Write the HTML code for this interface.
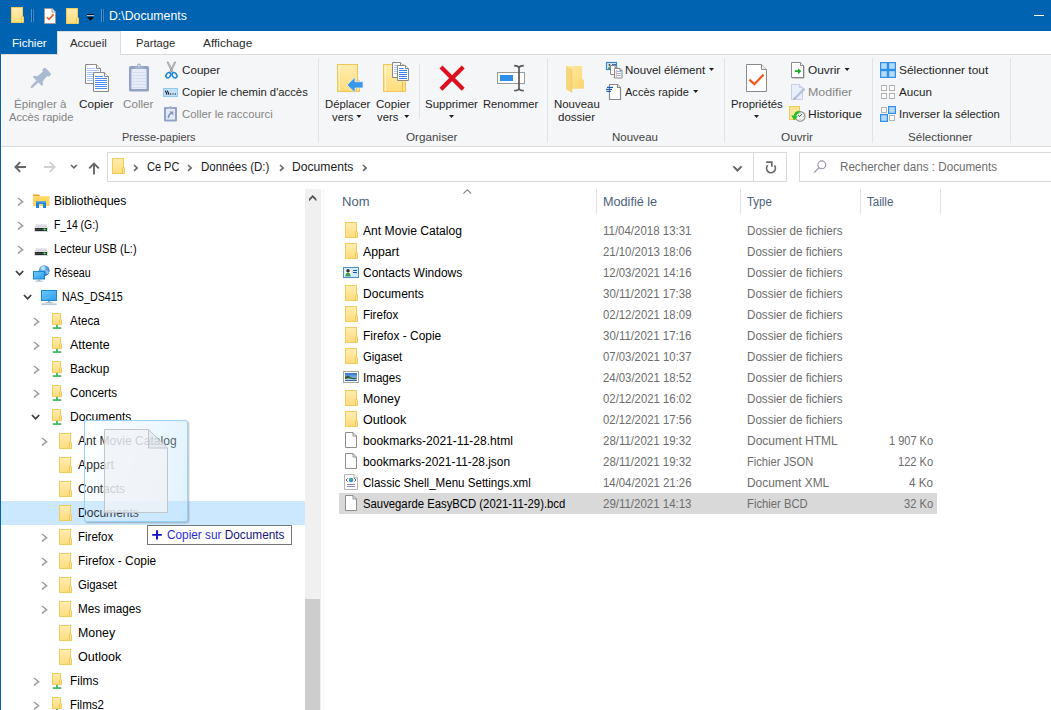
<!DOCTYPE html><html lang="fr"><head><meta charset="utf-8"><title>D:\Documents</title><style>
html,body{margin:0;padding:0;background:#fff;}
body{width:1051px;height:710px;overflow:hidden;position:relative;font-family:"Liberation Sans", sans-serif;font-size:12px;}
#w{position:absolute;left:0;top:0;width:1051px;height:710px;overflow:hidden;background:#fff;}
.t{position:absolute;white-space:pre;line-height:14px;height:14px;transform-origin:0 0;}
.b{position:absolute;}
svg{position:absolute;overflow:visible;}
</style></head><body><div id="w">
<div class="b" style="left:0;top:0;width:1051px;height:31px;background:#0063b1"></div>
<div class="b" style="left:0;top:31px;width:57px;height:23px;background:#0063b1"></div>
<div class="b" style="left:0;top:54px;width:1051px;height:92px;background:#f5f6f7;border-top:1px solid #dadbdc;border-bottom:1px solid #dadbdc;box-sizing:content-box;height:91px"></div>
<div class="b" style="left:57px;top:31px;width:62px;height:24px;background:#f5f6f7;border:1px solid #dadbdc;border-bottom:none;box-sizing:content-box;height:23px"></div>
<div class="b" style="left:1px;top:55px;width:1px;height:91px;background:#fdfdfd"></div>
<div class="b" style="left:318px;top:58px;width:1px;height:85px;background:#e2e3e4"></div>
<div class="b" style="left:547px;top:58px;width:1px;height:85px;background:#e2e3e4"></div>
<div class="b" style="left:724px;top:58px;width:1px;height:85px;background:#e2e3e4"></div>
<div class="b" style="left:872px;top:58px;width:1px;height:85px;background:#e2e3e4"></div>
<div class="b" style="left:1010px;top:58px;width:1px;height:85px;background:#e2e3e4"></div>
<div class="b" style="left:419px;top:64px;width:1px;height:55px;background:#e2e3e4"></div>
<div class="b" style="left:107px;top:152px;width:678px;height:28px;border:1px solid #d9d9d9;background:#fff"></div>
<div class="b" style="left:753px;top:153px;width:1px;height:28px;background:#d9d9d9"></div>
<div class="b" style="left:799px;top:152px;width:260px;height:28px;border:1px solid #d9d9d9;background:#fff"></div>
<div class="b" style="left:1px;top:501px;width:304px;height:24px;background:#cce8ff"></div>
<div class="b" style="left:305px;top:189px;width:16px;height:521px;background:#f0f0f0"></div>
<div class="b" style="left:305px;top:599px;width:15px;height:111px;background:#cdcdcd"></div>
<div class="b" style="left:323px;top:189px;width:1px;height:521px;background:#f6f6f6"></div>
<div class="b" style="left:596px;top:189px;width:1px;height:25px;background:#e2e2e2"></div>
<div class="b" style="left:740px;top:189px;width:1px;height:25px;background:#e2e2e2"></div>
<div class="b" style="left:860px;top:189px;width:1px;height:25px;background:#e2e2e2"></div>
<div class="b" style="left:940px;top:189px;width:1px;height:25px;background:#e2e2e2"></div>
<div class="b" style="left:339px;top:493px;width:598px;height:21px;background:#d9d9d9"></div>
<div class="b" style="left:0;top:0;width:1px;height:710px;background:#0063b1"></div>
<svg width="0" height="0" style="left:0;top:0"><defs>
<linearGradient id="gF" x1="0" y1="0" x2="0" y2="1"><stop offset="0" stop-color="#ffedb0"/><stop offset="1" stop-color="#ffdc7c"/></linearGradient>
<linearGradient id="gF2" x1="0" y1="0" x2="1" y2="1"><stop offset="0" stop-color="#ffe9a4"/><stop offset="1" stop-color="#fbd670"/></linearGradient>
<linearGradient id="gScr" x1="0" y1="0" x2="1" y2="1"><stop offset="0" stop-color="#6ccbff"/><stop offset="1" stop-color="#2f9bea"/></linearGradient>
<linearGradient id="gSky" x1="0" y1="0" x2="0" y2="1"><stop offset="0" stop-color="#2f74c8"/><stop offset="1" stop-color="#b8d8f4"/></linearGradient>
<radialGradient id="gGlobe" cx="0.4" cy="0.35" r="0.7"><stop offset="0" stop-color="#9bd4f7"/><stop offset="1" stop-color="#1f6fb8"/></radialGradient>
</defs></svg>
<svg style="left:11px;top:7px" width="13" height="16" viewBox="0 0 13 16"><rect x="0.5" y="0.5" width="11" height="15" fill="url(#gF)" stroke="#f1cb5e"/><path d="M10.5 15.5 V10.2 Q10.5 9.5 11.2 9.5 H11.8 Q12.5 9.5 12.5 10.2 V15.5 Z" fill="#ffe696" stroke="#efc75a"/></svg><div class="b" style="left:31px;top:9px;width:1px;height:13px;background:#4f95d2"></div><div class="b" style="left:32px;top:9px;width:1px;height:13px;background:#004e96"></div><div class="b" style="left:33px;top:9px;width:1px;height:13px;background:#3f86c6"></div><svg style="left:44px;top:8px" width="12" height="16" viewBox="0 0 12 16"><path d="M0.5 0.5 H8 L11.5 4 V15.5 H0.5 Z" fill="#fff" stroke="#9a9a9a"/><path d="M8 0.5 V4 H11.5" fill="#eee" stroke="#9a9a9a"/><path d="M2.8 9.2 L5 11.4 L9.6 6.4" fill="none" stroke="#f15a22" stroke-width="1.6"/></svg><svg style="left:66px;top:8px" width="13" height="16" viewBox="0 0 13 16"><rect x="0.5" y="0.5" width="11" height="15" fill="url(#gF)" stroke="#f1cb5e"/><path d="M10.5 15.5 V10.2 Q10.5 9.5 11.2 9.5 H11.8 Q12.5 9.5 12.5 10.2 V15.5 Z" fill="#ffe696" stroke="#efc75a"/></svg><div class="b" style="left:87px;top:14px;width:7px;height:1px;background:#0a0a0a"></div><div class="b" style="left:87px;top:15px;width:7px;height:1px;background:#cfe2f3;opacity:.8"></div><svg style="left:87px;top:17px" width="7" height="4" viewBox="0 0 7 4"><path d="M0 0 H7 L3.5 4 Z" fill="#0a0a0a"/></svg><div class="b" style="left:101px;top:9px;width:1px;height:13px;background:#4f95d2"></div><div class="b" style="left:102px;top:9px;width:1px;height:13px;background:#004e96"></div><div class="b" style="left:103px;top:9px;width:1px;height:13px;background:#3f86c6"></div><div class="b" style="left:1034px;top:15px;width:10px;height:1px;background:#fff"></div>
<svg style="left:14px;top:161px" width="12" height="12" viewBox="0 0 12 12"><path d="M12 6 H1.6 M6.2 1.2 L1.4 6 L6.2 10.8" fill="none" stroke="#666" stroke-width="1.9"/></svg><svg style="left:44px;top:161px" width="12" height="12" viewBox="0 0 12 12"><path d="M0 6 H10.4 M5.8 1.2 L10.6 6 L5.8 10.8" fill="none" stroke="#d0d0d0" stroke-width="1.9"/></svg><svg style="left:70.6px;top:164.6px" width="5.8" height="3.4" viewBox="0 0 5.8 3.4"><path d="M0 0 L2.9 2.9 L5.8 0" fill="none" stroke="#666" stroke-width="1.6"/></svg><svg style="left:88px;top:161.5px" width="12" height="12.5" viewBox="0 0 12 12.5"><path d="M6 12.5 V1.6 M1.2 6.4 L6 1.6 L10.8 6.4" fill="none" stroke="#666" stroke-width="1.9"/></svg><svg style="left:112px;top:158px" width="13" height="16" viewBox="0 0 13 16"><rect x="0.5" y="0.5" width="11" height="15" fill="url(#gF)" stroke="#f1cb5e"/><path d="M10.5 15.5 V10.2 Q10.5 9.5 11.2 9.5 H11.8 Q12.5 9.5 12.5 10.2 V15.5 Z" fill="#ffe696" stroke="#efc75a"/></svg><svg style="left:133.9px;top:164.6px" width="3.2" height="5.8" viewBox="0 0 3.2 5.8"><path d="M0.0 0 L3.2 2.9 L0 5.8" fill="none" stroke="#666" stroke-width="1.6"/></svg><svg style="left:187.9px;top:164.6px" width="3.2" height="5.8" viewBox="0 0 3.2 5.8"><path d="M0.0 0 L3.2 2.9 L0 5.8" fill="none" stroke="#666" stroke-width="1.6"/></svg><svg style="left:279.9px;top:164.6px" width="3.2" height="5.8" viewBox="0 0 3.2 5.8"><path d="M0.0 0 L3.2 2.9 L0 5.8" fill="none" stroke="#666" stroke-width="1.6"/></svg><svg style="left:363.4px;top:164.6px" width="3.2" height="5.8" viewBox="0 0 3.2 5.8"><path d="M0.0 0 L3.2 2.9 L0 5.8" fill="none" stroke="#666" stroke-width="1.6"/></svg><svg style="left:733.4px;top:165.6px" width="9" height="5.2" viewBox="0 0 9 5.2"><path d="M0.4 0.4 L4.5 4.5 L8.6 0.4" fill="none" stroke="#666" stroke-width="2"/></svg><svg style="left:764px;top:160px" width="14" height="14" viewBox="0 0 14 14"><path d="M10.5 5.6 A4.4 4.4 0 1 1 3.7 5.3" fill="none" stroke="#666" stroke-width="1.7"/><path d="M2.2 2.1 H7.8 V6.8" fill="none" stroke="#666" stroke-width="1.7"/></svg><svg style="left:813px;top:160px" width="14" height="14" viewBox="0 0 14 14"><circle cx="8.8" cy="4.8" r="3.9" fill="none" stroke="#9a90a6" stroke-width="1.1"/><path d="M6 7.6 L1.2 12.6" stroke="#9a90a6" stroke-width="1.2"/></svg><svg style="left:309px;top:194.6px" width="7.4" height="6.2" viewBox="0 0 7.4 6.2"><path d="M0 3.7 L3.7 0 L7.4 3.7 V6.2 L3.7 2.5 L0 6.2 Z" fill="#505050"/></svg><svg style="left:462.5px;top:188.8px" width="8.6" height="5" viewBox="0 0 8.6 5"><path d="M0.4 4.6 L4.3 0.8 L8.2 4.6" fill="none" stroke="#808080" stroke-width="1.1"/></svg>
<svg style="left:0;top:54px" width="1051" height="92" viewBox="0 54 1051 92"><g transform="translate(48 70.8) rotate(45)" fill="#a9bad1"><rect x="-4.8" y="-0.3" width="9.6" height="4.4" rx="1.5"/><rect x="-3.2" y="3" width="6.4" height="7"/><path d="M-3.2 8.6 Q-3.4 12 -5.8 12.8 Q-6.4 13.1 -6.4 13.8 V15 H6.4 V13.8 Q6.4 13.1 5.8 12.8 Q3.4 12 3.2 8.6 Z"/><path d="M-1.5 14.8 H1.5 L1.1 23.2 Q0 25 -1.1 23.2 Z"/></g><path d="M85.5 64.5 H96.5 L100.5 68.5 V83.5 H85.5 Z" fill="#fff" stroke="#8a8a8a" stroke-width="1"/><path d="M96.5 64.5 V68.5 H100.5" fill="#f2f2f2" stroke="#8a8a8a" stroke-width="1"/><path d="M87 68.5 H95" stroke="#a9c9f7" stroke-width="1"/><path d="M87 70.5 H99" stroke="#a9c9f7" stroke-width="1"/><path d="M87 72.5 H99" stroke="#a9c9f7" stroke-width="1"/><path d="M87 74.5 H99" stroke="#a9c9f7" stroke-width="1"/><path d="M87 76.5 H99" stroke="#a9c9f7" stroke-width="1"/><path d="M87 78.5 H99" stroke="#a9c9f7" stroke-width="1"/><path d="M87 80.5 H99" stroke="#a9c9f7" stroke-width="1"/><path d="M93.5 72.5 H104.5 L108.5 76.5 V91.5 H93.5 Z" fill="#fff" stroke="#8a8a8a" stroke-width="1"/><path d="M104.5 72.5 V76.5 H108.5" fill="#f2f2f2" stroke="#8a8a8a" stroke-width="1"/><path d="M95 76.5 H103" stroke="#4a8ef5" stroke-width="1"/><path d="M95 78.5 H107" stroke="#4a8ef5" stroke-width="1"/><path d="M95 80.5 H107" stroke="#4a8ef5" stroke-width="1"/><path d="M95 82.5 H107" stroke="#4a8ef5" stroke-width="1"/><path d="M95 84.5 H107" stroke="#4a8ef5" stroke-width="1"/><path d="M95 86.5 H107" stroke="#4a8ef5" stroke-width="1"/><path d="M95 88.5 H107" stroke="#4a8ef5" stroke-width="1"/><rect x="129" y="66" width="20" height="25.6" rx="1.5" fill="#91a2c6"/><rect x="131.5" y="69" width="15" height="20" fill="#e6ecf8"/><path d="M134.5 69 V66.5 H137 Q137 63.4 139 63.4 Q141 63.4 141 66.5 H143.5 V69 Z" fill="#a3b1cf"/><circle cx="139" cy="65.6" r="0.9" fill="#e6ecf8"/><path d="M131.5 72.5 H146.5" stroke="#d5deef" stroke-width="1"/><path d="M131.5 75.5 H146.5" stroke="#d5deef" stroke-width="1"/><path d="M131.5 78.5 H146.5" stroke="#d5deef" stroke-width="1"/><path d="M131.5 81.5 H146.5" stroke="#d5deef" stroke-width="1"/><path d="M131.5 84.5 H146.5" stroke="#d5deef" stroke-width="1"/><path d="M131.5 87.5 H146.5" stroke="#d5deef" stroke-width="1"/><path d="M167 62 L168.4 62 L173.6 73 L172.4 73.4 Z M175.8 62 L174.4 62 L169.2 73 L170.4 73.4 Z" fill="#d8d8d8" stroke="#8f8f8f" stroke-width="0.7"/><ellipse cx="168.3" cy="75.2" rx="2.1" ry="2.9" transform="rotate(35 168.3 75.2)" fill="none" stroke="#1b86d8" stroke-width="1.5"/><ellipse cx="174.5" cy="75.2" rx="2.1" ry="2.9" transform="rotate(-35 174.5 75.2)" fill="none" stroke="#1b86d8" stroke-width="1.5"/><rect x="163.5" y="88.5" width="14" height="8" fill="#bfe1fb" stroke="#93c8f0"/><path d="M165.4 90.6 L167 94.6 M167.4 90.6 L169 94.6" stroke="#111" stroke-width="1.1"/><path d="M170 94 H171.2 M172.4 94 H173.6 M174.8 94 H176" stroke="#111" stroke-width="1.1"/><rect x="164" y="107" width="13" height="14.6" rx="1" fill="#91a2c6"/><rect x="166" y="109" width="9" height="10.6" fill="#e3e9f6"/><path d="M167.5 109 V107.6 H169 Q169 106 170.5 106 Q172 106 172 107.6 H173.5 V109 Z" fill="#a3b1cf"/><path d="M169.4 111.4 H173.4 V115.4 Z" fill="#8496bd"/><path d="M172 112.8 Q168.6 114 168.4 118" fill="none" stroke="#8496bd" stroke-width="1.7"/><rect x="337.5" y="64.5" width="20" height="27" fill="url(#gF)" stroke="#efc858"/><path d="M339.5 65.5 V90.5" stroke="#fff4cc" stroke-width="1"/><path d="M356.5 91.5 V81.5 Q356.5 80 358 80 Q359.5 80 359.5 81.5 V91.5 Z" fill="#ffe28a" stroke="#efc350"/><path d="M347 85 L355 77.3 V81.7 H363 V88 H355 V92.6 Z" fill="#3b97e8" stroke="#dbeeff" stroke-width="0.8"/><rect x="383.5" y="64.5" width="20" height="27" fill="url(#gF)" stroke="#efc858"/><path d="M385.5 65.5 V90.5" stroke="#fff4cc" stroke-width="1"/><path d="M402.5 91.5 V81.5 Q402.5 80 404 80 Q405.5 80 405.5 81.5 V91.5 Z" fill="#ffe28a" stroke="#efc350"/><path d="M392.5 62.5 H400.5 L403.5 65.5 V77.5 H392.5 Z" fill="#fff" stroke="#8a8a8a" stroke-width="1"/><path d="M400.5 62.5 V65.5 H403.5" fill="#f2f2f2" stroke="#8a8a8a" stroke-width="1"/><path d="M394 65.5 H398" stroke="#a9c9f7" stroke-width="1"/><path d="M394 67.5 H402" stroke="#a9c9f7" stroke-width="1"/><path d="M394 69.5 H402" stroke="#a9c9f7" stroke-width="1"/><path d="M394 71.5 H402" stroke="#a9c9f7" stroke-width="1"/><path d="M394 73.5 H402" stroke="#a9c9f7" stroke-width="1"/><path d="M397.5 65.5 H405.5 L408.5 68.5 V80.5 H397.5 Z" fill="#fff" stroke="#8a8a8a" stroke-width="1"/><path d="M405.5 65.5 V68.5 H408.5" fill="#f2f2f2" stroke="#8a8a8a" stroke-width="1"/><path d="M399 68.5 H403.5" stroke="#3d84f2" stroke-width="1"/><path d="M399 70.5 H407" stroke="#3d84f2" stroke-width="1"/><path d="M399 72.5 H407" stroke="#3d84f2" stroke-width="1"/><path d="M399 74.5 H407" stroke="#3d84f2" stroke-width="1"/><path d="M399 76.5 H407" stroke="#3d84f2" stroke-width="1"/><path d="M399 78.5 H407" stroke="#3d84f2" stroke-width="1"/><path d="M441 67 L463.2 89.2 M463.2 67 L441 89.2" stroke="#de0f1e" stroke-width="4.2" fill="none"/><rect x="497.5" y="72.5" width="27" height="11" fill="#fff" stroke="#9b9b9b"/><rect x="500" y="75" width="13" height="6" fill="#2e8fe8"/><path d="M519 67 V89.5 M514.2 65.6 Q518.6 65.6 519 68 Q519.4 65.6 523.8 65.6 M514.2 90.6 Q518.6 90.6 519 88.4 Q519.4 90.6 523.8 90.6" fill="none" stroke="#595959" stroke-width="1.7"/><path d="M566.2 66 H582.1 V78.4 L584 80.6 V88.8 H571 Z" fill="url(#gF2)"/><path d="M566.1 66 L571.8 69.4 V92.6 L566.1 89.4 Z" fill="#f6d676"/><path d="M571.8 69.4 V92.6" stroke="#e9c35c" stroke-width="0.6"/><rect x="606.5" y="62.5" width="10" height="7" fill="#d9ecfa" stroke="#3b87c6" stroke-width="1.2"/><circle cx="609.5" cy="65" r="1" fill="#5a4a3a"/><path d="M608 69 Q608 66.4 609.6 66.4 Q611.2 66.4 611.2 69Z" fill="#4a9a5a"/><rect x="612" y="64" width="4" height="3" fill="#3b6ea6"/><path d="M610.5 65.5 H615.0 L617.0 67.5 V74.5 H610.5 Z" fill="#fff" stroke="#8a8a8a" stroke-width="1"/><path d="M615.0 65.5 V67.5 H617.0" fill="#f2f2f2" stroke="#8a8a8a" stroke-width="1"/><path d="M614.5 68.5 H620.0 L622.0 70.5 V78.0 H614.5 Z" fill="#fff" stroke="#8a8a8a" stroke-width="1"/><path d="M620.0 68.5 V70.5 H622.0" fill="#f2f2f2" stroke="#8a8a8a" stroke-width="1"/><path d="M617 71.5 H621" stroke="#8bb6ee" stroke-width="1"/><path d="M617 73.5 H621" stroke="#8bb6ee" stroke-width="1"/><path d="M617 75.5 H621" stroke="#8bb6ee" stroke-width="1"/><path d="M616.3 70 V77.6" stroke="#e88" stroke-width="0.8"/><path d="M609.5 84.5 H617.5 L620.5 87.5 V99.5 H609.5 Z" fill="#fff" stroke="#8a8a8a" stroke-width="1.2"/><path d="M617.5 84.5 V87.5 H620.5" fill="#f2f2f2" stroke="#8a8a8a" stroke-width="1.2"/><path d="M607 87.4 H613" stroke="#1a5fb4" stroke-width="1.2"/><path d="M606 89.4 H612" stroke="#1a5fb4" stroke-width="1.2"/><path d="M606.4 91.4 H611" stroke="#1a5fb4" stroke-width="1.2"/><path d="M746.5 64.5 H761.5 L766.5 69.5 V91.5 H746.5 Z" fill="#fff" stroke="#8a8a8a" stroke-width="1"/><path d="M761.5 64.5 V69.5 H766.5" fill="#f2f2f2" stroke="#8a8a8a" stroke-width="1"/><path d="M749.4 79.6 L754.4 84.2 L763.6 74.6" fill="none" stroke="#f25a1d" stroke-width="2.3"/><path d="M791.5 62.5 H800.5 L803.5 65.5 V77.5 H791.5 Z" fill="#fff" stroke="#8c8c8c" stroke-width="1"/><path d="M800.5 62.5 V65.5 H803.5" fill="#f2f2f2" stroke="#8c8c8c" stroke-width="1"/><path d="M792 78 H804 V66" fill="none" stroke="#6a6a6a" stroke-width="0.8" opacity="0.7"/><path d="M794.8 70.3 H798 V68.2 L801.4 71.2 L798 74.2 V72.1 H794.8 Z" fill="#1fa824"/><path d="M791.5 84.5 H799.5 L802.5 87.5 V99.5 H791.5 Z" fill="#e9eef8" stroke="#c3cfe6" stroke-width="1"/><path d="M799.5 84.5 V87.5 H802.5" fill="#dfe6f3" stroke="#c3cfe6" stroke-width="1"/><path d="M804.6 88.6 L794 99.2" stroke="#b3c0dc" stroke-width="2.2"/><path d="M794.6 97.2 L793.4 99.8 L796 98.8 Z" fill="#9aa8c8"/><rect x="789.5" y="106.5" width="10" height="13" fill="#ffe59b" stroke="#f3ca52"/><circle cx="800.2" cy="116.4" r="4.8" fill="#eef0f2" stroke="#8e8e8e" stroke-width="1.1"/><path d="M798.2 115 L799.5 116.6 L801.8 114.2" fill="none" stroke="#3a3a3a" stroke-width="0.9"/><path d="M800.2 112.8 v0.8 M800.2 119.2 v0.8 M803 116.4 h0.8" stroke="#777" stroke-width="0.7"/><path d="M799.4 112 Q795.4 112.2 794.8 116.4" fill="none" stroke="#22c022" stroke-width="2.6"/><path d="M791.2 115.2 L797.8 116.4 L794 120.2 Z" fill="#22c022"/><rect x="880.6" y="62.6" width="6.8" height="6.8" fill="#b3dafc" stroke="#2e8fe8" stroke-width="1.2"/><rect x="888.6" y="62.6" width="6.8" height="6.8" fill="#b3dafc" stroke="#2e8fe8" stroke-width="1.2"/><rect x="880.6" y="70.6" width="6.8" height="6.8" fill="#b3dafc" stroke="#2e8fe8" stroke-width="1.2"/><rect x="888.6" y="70.6" width="6.8" height="6.8" fill="#b3dafc" stroke="#2e8fe8" stroke-width="1.2"/><rect x="881.5" y="85.5" width="5" height="5" fill="#fff" stroke="#b2b2b2"/><rect x="889.5" y="85.5" width="5" height="5" fill="#fff" stroke="#b2b2b2"/><rect x="881.5" y="93.5" width="5" height="5" fill="#fff" stroke="#b2b2b2"/><rect x="889.5" y="93.5" width="5" height="5" fill="#fff" stroke="#b2b2b2"/><rect x="881.5" y="107.5" width="5" height="5" fill="#fff" stroke="#b2b2b2"/><rect x="889.5" y="115.5" width="5" height="5" fill="#fff" stroke="#b2b2b2"/><rect x="888.6" y="106.6" width="6.8" height="6.8" fill="#b3dafc" stroke="#2e8fe8" stroke-width="1.2"/><rect x="880.6" y="114.6" width="6.8" height="6.8" fill="#b3dafc" stroke="#2e8fe8" stroke-width="1.2"/><path d="M356.4 115 h5 l-2.5 3 Z" fill="#1e1e1e"/><path d="M404.2 115 h5 l-2.5 3 Z" fill="#1e1e1e"/><path d="M449 115 h5 l-2.5 3 Z" fill="#1e1e1e"/><path d="M754 115 h5 l-2.5 3 Z" fill="#1e1e1e"/><path d="M709 68 h5 l-2.5 3 Z" fill="#1e1e1e"/><path d="M693.2 90 h5 l-2.5 3 Z" fill="#1e1e1e"/><path d="M844.6 68 h5 l-2.5 3 Z" fill="#1e1e1e"/></svg>
<svg style="left:345px;top:222px" width="13" height="16" viewBox="0 0 13 16"><rect x="0.5" y="0.5" width="11" height="15" fill="url(#gF)" stroke="#f1cb5e"/><path d="M10.5 15.5 V10.2 Q10.5 9.5 11.2 9.5 H11.8 Q12.5 9.5 12.5 10.2 V15.5 Z" fill="#ffe696" stroke="#efc75a"/></svg>
<svg style="left:345px;top:243px" width="13" height="16" viewBox="0 0 13 16"><rect x="0.5" y="0.5" width="11" height="15" fill="url(#gF)" stroke="#f1cb5e"/><path d="M10.5 15.5 V10.2 Q10.5 9.5 11.2 9.5 H11.8 Q12.5 9.5 12.5 10.2 V15.5 Z" fill="#ffe696" stroke="#efc75a"/></svg>
<svg style="left:343px;top:267px" width="16" height="11" viewBox="0 0 16 11"><rect x="0.5" y="0.5" width="15" height="10" fill="#d3eafa" stroke="#4a93cf"/><rect x="1.5" y="1.5" width="7" height="8" fill="#eef7fd"/><circle cx="5" cy="3.8" r="1.7" fill="#3b2a1e"/><path d="M2.3 9.5 Q2.3 5.8 5 5.8 Q7.7 5.8 7.7 9.5 Z" fill="#3f9a57"/><path d="M10 3.5 H14 M10 5.5 H14" stroke="#1d5a96" stroke-width="1"/></svg>
<svg style="left:345px;top:285px" width="13" height="16" viewBox="0 0 13 16"><rect x="0.5" y="0.5" width="11" height="15" fill="url(#gF)" stroke="#f1cb5e"/><path d="M10.5 15.5 V10.2 Q10.5 9.5 11.2 9.5 H11.8 Q12.5 9.5 12.5 10.2 V15.5 Z" fill="#ffe696" stroke="#efc75a"/></svg>
<svg style="left:345px;top:306px" width="13" height="16" viewBox="0 0 13 16"><rect x="0.5" y="0.5" width="11" height="15" fill="url(#gF)" stroke="#f1cb5e"/><path d="M10.5 15.5 V10.2 Q10.5 9.5 11.2 9.5 H11.8 Q12.5 9.5 12.5 10.2 V15.5 Z" fill="#ffe696" stroke="#efc75a"/></svg>
<svg style="left:345px;top:327px" width="13" height="16" viewBox="0 0 13 16"><rect x="0.5" y="0.5" width="11" height="15" fill="url(#gF)" stroke="#f1cb5e"/><path d="M10.5 15.5 V10.2 Q10.5 9.5 11.2 9.5 H11.8 Q12.5 9.5 12.5 10.2 V15.5 Z" fill="#ffe696" stroke="#efc75a"/></svg>
<svg style="left:345px;top:348px" width="13" height="16" viewBox="0 0 13 16"><rect x="0.5" y="0.5" width="11" height="15" fill="url(#gF)" stroke="#f1cb5e"/><path d="M10.5 15.5 V10.2 Q10.5 9.5 11.2 9.5 H11.8 Q12.5 9.5 12.5 10.2 V15.5 Z" fill="#ffe696" stroke="#efc75a"/></svg>
<svg style="left:343px;top:371px" width="16" height="12" viewBox="0 0 16 12"><rect x="0.5" y="0.5" width="15" height="11" fill="#fff" stroke="#a6a6a6"/><rect x="2" y="2" width="12" height="8" fill="url(#gSky)"/><path d="M2 6 Q5 3.5 8 6.5 Q10 7.3 14 7 V10 H2 Z" fill="#2f5b3c"/><path d="M2 8 Q6 7 9 8 Q12 8.6 14 7.6 V10 H2 Z" fill="#dfeaf2"/><rect x="2" y="8.8" width="12" height="1.2" fill="#2a66a8"/></svg>
<svg style="left:345px;top:390px" width="13" height="16" viewBox="0 0 13 16"><rect x="0.5" y="0.5" width="11" height="15" fill="url(#gF)" stroke="#f1cb5e"/><path d="M10.5 15.5 V10.2 Q10.5 9.5 11.2 9.5 H11.8 Q12.5 9.5 12.5 10.2 V15.5 Z" fill="#ffe696" stroke="#efc75a"/></svg>
<svg style="left:345px;top:411px" width="13" height="16" viewBox="0 0 13 16"><rect x="0.5" y="0.5" width="11" height="15" fill="url(#gF)" stroke="#f1cb5e"/><path d="M10.5 15.5 V10.2 Q10.5 9.5 11.2 9.5 H11.8 Q12.5 9.5 12.5 10.2 V15.5 Z" fill="#ffe696" stroke="#efc75a"/></svg>
<svg style="left:345px;top:432px" width="12" height="16" viewBox="0 0 12 16"><path d="M0.5 0.5 H8 L11.5 4 V15.5 H0.5 Z" fill="#fff" stroke="#8e8e8e"/><path d="M8 0.5 V4 H11.5" fill="none" stroke="#8e8e8e"/></svg>
<svg style="left:345px;top:453px" width="12" height="16" viewBox="0 0 12 16"><path d="M0.5 0.5 H8 L11.5 4 V15.5 H0.5 Z" fill="#fff" stroke="#8e8e8e"/><path d="M8 0.5 V4 H11.5" fill="none" stroke="#8e8e8e"/></svg>
<svg style="left:344px;top:474px" width="14" height="16" viewBox="0 0 14 16"><path d="M0.5 0.5 H10 L13.5 4 V15.5 H0.5 Z" fill="#fff" stroke="#b4b4b4"/><path d="M10 0.5 V4 H13.5" fill="#f4f4f4" stroke="#b4b4b4"/><circle cx="7" cy="6" r="2.2" fill="#2c8ed6"/><circle cx="6.6" cy="5.6" r="1" fill="#5fc36a"/><path d="M3.6 4.4 L2 6 L3.6 7.6 M10.4 4.4 L12 6 L10.4 7.6" fill="none" stroke="#555" stroke-width="0.9"/><path d="M3 10.5 H11 M3 12.5 H11" stroke="#8c88b8" stroke-width="1"/></svg>
<svg style="left:345px;top:495px" width="12" height="16" viewBox="0 0 12 16"><path d="M0.5 0.5 H8 L11.5 4 V15.5 H0.5 Z" fill="#fff" stroke="#8e8e8e"/><path d="M8 0.5 V4 H11.5" fill="none" stroke="#8e8e8e"/></svg>
<svg style="left:32.5px;top:193.5px" width="17" height="14" viewBox="0 0 17 14"><path d="M0 0.5 H6 L7.5 2.5 H0 Z" fill="#e8a21a"/><path d="M0 2 H16.5 V12 H0 Z" fill="#ffd75e"/><path d="M0 2 H16.5 V3 H0 Z" fill="#ffe38c"/><path d="M3 14 V7.5 H13 V14 H10 V10 H6 V14 Z" fill="#1f86e0"/><path d="M3 7.5 H13 V8.6 H3 Z" fill="#4aa6f0"/></svg>
<svg style="left:17.6px;top:198.1px" width="4.6" height="7.4" viewBox="0 0 4.6 7.4"><path d="M0.0 0 L4.6 3.7 L0 7.4" fill="none" stroke="#a0a0a0" stroke-width="1.6"/></svg>
<svg style="left:34.0px;top:224px" width="14" height="8" viewBox="0 0 14 8"><path d="M2 0 H12.3 L13.8 4 H0.6 Z" fill="#d9dbdf"/><path d="M2.4 0 H12 L12.3 1 H2 Z" fill="#e6e7ea"/><rect x="0.5" y="7" width="13.6" height="1" fill="#d2d5d9"/><rect x="0.8" y="4" width="12.4" height="3" rx="0.4" fill="#2c2c2c"/><rect x="1" y="5" width="12" height="0.8" fill="#444"/><circle cx="10.6" cy="5.45" r="1.15" fill="#35e55f"/></svg>
<svg style="left:17.6px;top:222.1px" width="4.6" height="7.4" viewBox="0 0 4.6 7.4"><path d="M0.0 0 L4.6 3.7 L0 7.4" fill="none" stroke="#a0a0a0" stroke-width="1.6"/></svg>
<svg style="left:34.0px;top:248px" width="14" height="8" viewBox="0 0 14 8"><path d="M2 0 H12.3 L13.8 4 H0.6 Z" fill="#d9dbdf"/><path d="M2.4 0 H12 L12.3 1 H2 Z" fill="#e6e7ea"/><rect x="0.5" y="7" width="13.6" height="1" fill="#d2d5d9"/><rect x="0.8" y="4" width="12.4" height="3" rx="0.4" fill="#2c2c2c"/><rect x="1" y="5" width="12" height="0.8" fill="#444"/><circle cx="10.6" cy="5.45" r="1.15" fill="#35e55f"/></svg>
<svg style="left:17.6px;top:246.1px" width="4.6" height="7.4" viewBox="0 0 4.6 7.4"><path d="M0.0 0 L4.6 3.7 L0 7.4" fill="none" stroke="#a0a0a0" stroke-width="1.6"/></svg>
<svg style="left:33.0px;top:264.5px" width="17" height="17" viewBox="0 0 17 17"><circle cx="11.2" cy="5.6" r="5.4" fill="url(#gGlobe)"/><path d="M8 2.2 Q10 0.8 12 1.6 Q11 3 12.4 4 Q11 5.6 9 4.6 Q7.6 4 8 2.2 Z" fill="#bfe6fb" opacity="0.9"/><path d="M13.5 5 Q15.5 5.5 16 7.5 Q15 9.5 13.6 9 Q13 7 13.5 5Z" fill="#a9dbf7" opacity="0.8"/><rect x="0.5" y="6.5" width="11" height="7.5" fill="url(#gScr)" stroke="#1c86d4"/><rect x="5" y="14.5" width="2" height="1.2" fill="#8fa6b8"/><rect x="2.5" y="15.6" width="7" height="1" fill="#9fb4c4"/></svg>
<svg style="left:16.0px;top:270.8px" width="7.2" height="3.8" viewBox="0 0 7.2 3.8"><path d="M0 0 L3.6 3.8 L7.2 0" fill="none" stroke="#3c3c3c" stroke-width="1.8"/></svg>
<svg style="left:41.0px;top:290px" width="16" height="15" viewBox="0 0 16 15"><rect x="0.5" y="0.5" width="15" height="10" fill="url(#gScr)" stroke="#1c86d4"/><rect x="7" y="11" width="2" height="1.6" fill="#9ab0c2"/><rect x="4.5" y="12.2" width="7" height="0.8" fill="#9ab0c2"/><rect x="0.3" y="13.6" width="15.4" height="1" fill="#8aa4ba"/></svg>
<svg style="left:24.0px;top:294.8px" width="7.2" height="3.8" viewBox="0 0 7.2 3.8"><path d="M0 0 L3.6 3.8 L7.2 0" fill="none" stroke="#3c3c3c" stroke-width="1.8"/></svg>
<svg style="left:51.5px;top:313px" width="11" height="16" viewBox="0 0 11 16"><rect x="0.5" y="0.5" width="8" height="11" fill="url(#gF)" stroke="#f1cb5e"/><path d="M7.5 11.5 V7.2 Q7.5 6.5 8.2 6.5 H8.8 Q9.5 6.5 9.5 7.2 V11.5 Z" fill="#ffe696" stroke="#efc75a"/><rect x="4.2" y="12" width="1.6" height="2.6" fill="#1fb04a"/><rect x="0.8" y="14.3" width="8.4" height="1.5" fill="#1fb04a"/></svg>
<svg style="left:33.6px;top:318.1px" width="4.6" height="7.4" viewBox="0 0 4.6 7.4"><path d="M0.0 0 L4.6 3.7 L0 7.4" fill="none" stroke="#a0a0a0" stroke-width="1.6"/></svg>
<svg style="left:51.5px;top:337px" width="11" height="16" viewBox="0 0 11 16"><rect x="0.5" y="0.5" width="8" height="11" fill="url(#gF)" stroke="#f1cb5e"/><path d="M7.5 11.5 V7.2 Q7.5 6.5 8.2 6.5 H8.8 Q9.5 6.5 9.5 7.2 V11.5 Z" fill="#ffe696" stroke="#efc75a"/><rect x="4.2" y="12" width="1.6" height="2.6" fill="#1fb04a"/><rect x="0.8" y="14.3" width="8.4" height="1.5" fill="#1fb04a"/></svg>
<svg style="left:33.6px;top:342.1px" width="4.6" height="7.4" viewBox="0 0 4.6 7.4"><path d="M0.0 0 L4.6 3.7 L0 7.4" fill="none" stroke="#a0a0a0" stroke-width="1.6"/></svg>
<svg style="left:51.5px;top:361px" width="11" height="16" viewBox="0 0 11 16"><rect x="0.5" y="0.5" width="8" height="11" fill="url(#gF)" stroke="#f1cb5e"/><path d="M7.5 11.5 V7.2 Q7.5 6.5 8.2 6.5 H8.8 Q9.5 6.5 9.5 7.2 V11.5 Z" fill="#ffe696" stroke="#efc75a"/><rect x="4.2" y="12" width="1.6" height="2.6" fill="#1fb04a"/><rect x="0.8" y="14.3" width="8.4" height="1.5" fill="#1fb04a"/></svg>
<svg style="left:33.6px;top:366.1px" width="4.6" height="7.4" viewBox="0 0 4.6 7.4"><path d="M0.0 0 L4.6 3.7 L0 7.4" fill="none" stroke="#a0a0a0" stroke-width="1.6"/></svg>
<svg style="left:51.5px;top:385px" width="11" height="16" viewBox="0 0 11 16"><rect x="0.5" y="0.5" width="8" height="11" fill="url(#gF)" stroke="#f1cb5e"/><path d="M7.5 11.5 V7.2 Q7.5 6.5 8.2 6.5 H8.8 Q9.5 6.5 9.5 7.2 V11.5 Z" fill="#ffe696" stroke="#efc75a"/><rect x="4.2" y="12" width="1.6" height="2.6" fill="#1fb04a"/><rect x="0.8" y="14.3" width="8.4" height="1.5" fill="#1fb04a"/></svg>
<svg style="left:33.6px;top:390.1px" width="4.6" height="7.4" viewBox="0 0 4.6 7.4"><path d="M0.0 0 L4.6 3.7 L0 7.4" fill="none" stroke="#a0a0a0" stroke-width="1.6"/></svg>
<svg style="left:51.5px;top:409px" width="11" height="16" viewBox="0 0 11 16"><rect x="0.5" y="0.5" width="8" height="11" fill="url(#gF)" stroke="#f1cb5e"/><path d="M7.5 11.5 V7.2 Q7.5 6.5 8.2 6.5 H8.8 Q9.5 6.5 9.5 7.2 V11.5 Z" fill="#ffe696" stroke="#efc75a"/><rect x="4.2" y="12" width="1.6" height="2.6" fill="#1fb04a"/><rect x="0.8" y="14.3" width="8.4" height="1.5" fill="#1fb04a"/></svg>
<svg style="left:32.0px;top:414.8px" width="7.2" height="3.8" viewBox="0 0 7.2 3.8"><path d="M0 0 L3.6 3.8 L7.2 0" fill="none" stroke="#3c3c3c" stroke-width="1.8"/></svg>
<svg style="left:59px;top:433px" width="13" height="16" viewBox="0 0 13 16"><rect x="0.5" y="0.5" width="11" height="15" fill="url(#gF)" stroke="#f1cb5e"/><path d="M10.5 15.5 V10.2 Q10.5 9.5 11.2 9.5 H11.8 Q12.5 9.5 12.5 10.2 V15.5 Z" fill="#ffe696" stroke="#efc75a"/></svg>
<svg style="left:41.6px;top:438.1px" width="4.6" height="7.4" viewBox="0 0 4.6 7.4"><path d="M0.0 0 L4.6 3.7 L0 7.4" fill="none" stroke="#a0a0a0" stroke-width="1.6"/></svg>
<svg style="left:59px;top:457px" width="13" height="16" viewBox="0 0 13 16"><rect x="0.5" y="0.5" width="11" height="15" fill="url(#gF)" stroke="#f1cb5e"/><path d="M10.5 15.5 V10.2 Q10.5 9.5 11.2 9.5 H11.8 Q12.5 9.5 12.5 10.2 V15.5 Z" fill="#ffe696" stroke="#efc75a"/></svg>
<svg style="left:59px;top:481px" width="13" height="16" viewBox="0 0 13 16"><rect x="0.5" y="0.5" width="11" height="15" fill="url(#gF)" stroke="#f1cb5e"/><path d="M10.5 15.5 V10.2 Q10.5 9.5 11.2 9.5 H11.8 Q12.5 9.5 12.5 10.2 V15.5 Z" fill="#ffe696" stroke="#efc75a"/></svg>
<svg style="left:59px;top:505px" width="13" height="16" viewBox="0 0 13 16"><rect x="0.5" y="0.5" width="11" height="15" fill="url(#gF)" stroke="#f1cb5e"/><path d="M10.5 15.5 V10.2 Q10.5 9.5 11.2 9.5 H11.8 Q12.5 9.5 12.5 10.2 V15.5 Z" fill="#ffe696" stroke="#efc75a"/></svg>
<svg style="left:59px;top:529px" width="13" height="16" viewBox="0 0 13 16"><rect x="0.5" y="0.5" width="11" height="15" fill="url(#gF)" stroke="#f1cb5e"/><path d="M10.5 15.5 V10.2 Q10.5 9.5 11.2 9.5 H11.8 Q12.5 9.5 12.5 10.2 V15.5 Z" fill="#ffe696" stroke="#efc75a"/></svg>
<svg style="left:41.6px;top:534.1px" width="4.6" height="7.4" viewBox="0 0 4.6 7.4"><path d="M0.0 0 L4.6 3.7 L0 7.4" fill="none" stroke="#a0a0a0" stroke-width="1.6"/></svg>
<svg style="left:59px;top:553px" width="13" height="16" viewBox="0 0 13 16"><rect x="0.5" y="0.5" width="11" height="15" fill="url(#gF)" stroke="#f1cb5e"/><path d="M10.5 15.5 V10.2 Q10.5 9.5 11.2 9.5 H11.8 Q12.5 9.5 12.5 10.2 V15.5 Z" fill="#ffe696" stroke="#efc75a"/></svg>
<svg style="left:41.6px;top:558.1px" width="4.6" height="7.4" viewBox="0 0 4.6 7.4"><path d="M0.0 0 L4.6 3.7 L0 7.4" fill="none" stroke="#a0a0a0" stroke-width="1.6"/></svg>
<svg style="left:59px;top:577px" width="13" height="16" viewBox="0 0 13 16"><rect x="0.5" y="0.5" width="11" height="15" fill="url(#gF)" stroke="#f1cb5e"/><path d="M10.5 15.5 V10.2 Q10.5 9.5 11.2 9.5 H11.8 Q12.5 9.5 12.5 10.2 V15.5 Z" fill="#ffe696" stroke="#efc75a"/></svg>
<svg style="left:41.6px;top:582.1px" width="4.6" height="7.4" viewBox="0 0 4.6 7.4"><path d="M0.0 0 L4.6 3.7 L0 7.4" fill="none" stroke="#a0a0a0" stroke-width="1.6"/></svg>
<svg style="left:59px;top:601px" width="13" height="16" viewBox="0 0 13 16"><rect x="0.5" y="0.5" width="11" height="15" fill="url(#gF)" stroke="#f1cb5e"/><path d="M10.5 15.5 V10.2 Q10.5 9.5 11.2 9.5 H11.8 Q12.5 9.5 12.5 10.2 V15.5 Z" fill="#ffe696" stroke="#efc75a"/></svg>
<svg style="left:41.6px;top:606.1px" width="4.6" height="7.4" viewBox="0 0 4.6 7.4"><path d="M0.0 0 L4.6 3.7 L0 7.4" fill="none" stroke="#a0a0a0" stroke-width="1.6"/></svg>
<svg style="left:59px;top:625px" width="13" height="16" viewBox="0 0 13 16"><rect x="0.5" y="0.5" width="11" height="15" fill="url(#gF)" stroke="#f1cb5e"/><path d="M10.5 15.5 V10.2 Q10.5 9.5 11.2 9.5 H11.8 Q12.5 9.5 12.5 10.2 V15.5 Z" fill="#ffe696" stroke="#efc75a"/></svg>
<svg style="left:59px;top:649px" width="13" height="16" viewBox="0 0 13 16"><rect x="0.5" y="0.5" width="11" height="15" fill="url(#gF)" stroke="#f1cb5e"/><path d="M10.5 15.5 V10.2 Q10.5 9.5 11.2 9.5 H11.8 Q12.5 9.5 12.5 10.2 V15.5 Z" fill="#ffe696" stroke="#efc75a"/></svg>
<svg style="left:51.5px;top:673px" width="11" height="16" viewBox="0 0 11 16"><rect x="0.5" y="0.5" width="8" height="11" fill="url(#gF)" stroke="#f1cb5e"/><path d="M7.5 11.5 V7.2 Q7.5 6.5 8.2 6.5 H8.8 Q9.5 6.5 9.5 7.2 V11.5 Z" fill="#ffe696" stroke="#efc75a"/><rect x="4.2" y="12" width="1.6" height="2.6" fill="#1fb04a"/><rect x="0.8" y="14.3" width="8.4" height="1.5" fill="#1fb04a"/></svg>
<svg style="left:33.6px;top:678.1px" width="4.6" height="7.4" viewBox="0 0 4.6 7.4"><path d="M0.0 0 L4.6 3.7 L0 7.4" fill="none" stroke="#a0a0a0" stroke-width="1.6"/></svg>
<svg style="left:51.5px;top:697px" width="11" height="16" viewBox="0 0 11 16"><rect x="0.5" y="0.5" width="8" height="11" fill="url(#gF)" stroke="#f1cb5e"/><path d="M7.5 11.5 V7.2 Q7.5 6.5 8.2 6.5 H8.8 Q9.5 6.5 9.5 7.2 V11.5 Z" fill="#ffe696" stroke="#efc75a"/><rect x="4.2" y="12" width="1.6" height="2.6" fill="#1fb04a"/><rect x="0.8" y="14.3" width="8.4" height="1.5" fill="#1fb04a"/></svg>
<svg style="left:33.6px;top:702.1px" width="4.6" height="7.4" viewBox="0 0 4.6 7.4"><path d="M0.0 0 L4.6 3.7 L0 7.4" fill="none" stroke="#a0a0a0" stroke-width="1.6"/></svg>
<span class="t" id="t0" style="left:109.3px;top:9px;color:#fff;transform:scaleX(1.0233);">D:\Documents</span>
<span class="t" id="t1" style="left:11.7px;top:36px;color:#fff;font-size:11.5px;transform:scaleX(1.0053);">Fichier</span>
<span class="t" id="t2" style="left:70.3px;top:36px;color:#2b2b2b;font-size:11.5px;transform:scaleX(0.9925);">Accueil</span>
<span class="t" id="t3" style="left:135.9px;top:36px;color:#2b2b2b;font-size:11.5px;transform:scaleX(0.9732);">Partage</span>
<span class="t" id="t4" style="left:203.3px;top:36px;color:#2b2b2b;font-size:11.5px;transform:scaleX(1.0325);">Affichage</span>
<span class="t" id="t5" style="left:14.3px;top:97px;color:#858585;font-size:11.5px;transform:scaleX(1.0136);">Épingler à</span>
<span class="t" id="t6" style="left:8.5px;top:110px;color:#858585;font-size:11.5px;transform:scaleX(0.9686);">Accès rapide</span>
<span class="t" id="t7" style="left:78.6px;top:97px;color:#1e1e1e;font-size:11.5px;transform:scaleX(1.0180);">Copier</span>
<span class="t" id="t8" style="left:122.6px;top:97px;color:#858585;font-size:11.5px;transform:scaleX(1.0151);">Coller</span>
<span class="t" id="t9" style="left:181.9px;top:63px;color:#1e1e1e;font-size:11.5px;transform:scaleX(1.0128);">Couper</span>
<span class="t" id="t10" style="left:181.9px;top:85px;color:#1e1e1e;font-size:11.5px;transform:scaleX(0.9819);">Copier le chemin d'accès</span>
<span class="t" id="t11" style="left:181.9px;top:107px;color:#858585;font-size:11.5px;transform:scaleX(0.9855);">Coller le raccourci</span>
<span class="t" id="t12" style="left:121.8px;top:130px;color:#444444;font-size:11.5px;transform:scaleX(0.9516);">Presse-papiers</span>
<span class="t" id="t13" style="left:324.8px;top:97px;color:#1e1e1e;font-size:11.5px;transform:scaleX(0.9841);">Déplacer</span>
<span class="t" id="t14" style="left:332.1px;top:110px;color:#1e1e1e;font-size:11.5px;transform:scaleX(0.9800);">vers</span>
<span class="t" id="t15" style="left:375.8px;top:97px;color:#1e1e1e;font-size:11.5px;transform:scaleX(1.0032);">Copier</span>
<span class="t" id="t16" style="left:377.1px;top:110px;color:#1e1e1e;font-size:11.5px;transform:scaleX(0.9800);">vers</span>
<span class="t" id="t17" style="left:424.8px;top:97px;color:#1e1e1e;font-size:11.5px;transform:scaleX(0.9969);">Supprimer</span>
<span class="t" id="t18" style="left:482.7px;top:97px;color:#1e1e1e;font-size:11.5px;transform:scaleX(0.9703);">Renommer</span>
<span class="t" id="t19" style="left:405.7px;top:130px;color:#444444;font-size:11.5px;transform:scaleX(1.0178);">Organiser</span>
<span class="t" id="t20" style="left:553.9px;top:97px;color:#1e1e1e;font-size:11.5px;transform:scaleX(0.9946);">Nouveau</span>
<span class="t" id="t21" style="left:558.1px;top:110px;color:#1e1e1e;font-size:11.5px;transform:scaleX(0.9979);">dossier</span>
<span class="t" id="t22" style="left:624.9px;top:63px;color:#1e1e1e;font-size:11.5px;transform:scaleX(1.0024);">Nouvel élément</span>
<span class="t" id="t23" style="left:624.9px;top:85px;color:#1e1e1e;font-size:11.5px;transform:scaleX(0.9611);">Accès rapide</span>
<span class="t" id="t24" style="left:611.9px;top:130px;color:#444444;font-size:11.5px;transform:scaleX(0.9990);">Nouveau</span>
<span class="t" id="t25" style="left:730.6px;top:97px;color:#1e1e1e;font-size:11.5px;transform:scaleX(0.9881);">Propriétés</span>
<span class="t" id="t26" style="left:807.8px;top:63px;color:#1e1e1e;font-size:11.5px;transform:scaleX(1.0315);">Ouvrir</span>
<span class="t" id="t27" style="left:807.8px;top:85px;color:#858585;font-size:11.5px;transform:scaleX(1.0805);">Modifier</span>
<span class="t" id="t28" style="left:807.8px;top:107px;color:#1e1e1e;font-size:11.5px;transform:scaleX(1.0409);">Historique</span>
<span class="t" id="t29" style="left:781.1px;top:130px;color:#444444;font-size:11.5px;transform:scaleX(1.0220);">Ouvrir</span>
<span class="t" id="t30" style="left:898.7px;top:63px;color:#1e1e1e;font-size:11.5px;transform:scaleX(1.0335);">Sélectionner tout</span>
<span class="t" id="t31" style="left:898.7px;top:85px;color:#1e1e1e;font-size:11.5px;transform:scaleX(1.0089);">Aucun</span>
<span class="t" id="t32" style="left:898.7px;top:107px;color:#1e1e1e;font-size:11.5px;transform:scaleX(0.9855);">Inverser la sélection</span>
<span class="t" id="t33" style="left:907.8px;top:130px;color:#444444;font-size:11.5px;transform:scaleX(1.0057);">Sélectionner</span>
<span class="t" id="t34" style="left:146.7px;top:160px;color:#1a1a1a;transform:scaleX(0.9167);">Ce PC</span>
<span class="t" id="t35" style="left:201.3px;top:160px;color:#1a1a1a;transform:scaleX(0.9569);">Données (D:)</span>
<span class="t" id="t36" style="left:292.3px;top:160px;color:#1a1a1a;transform:scaleX(1.0115);">Documents</span>
<span class="t" id="t37" style="left:839.6px;top:160px;color:#6d6d6d;transform:scaleX(0.9693);">Rechercher dans : Documents</span>
<span class="t" id="t38" style="left:341.6px;top:195px;color:#4c607a;transform:scaleX(1.0851);">Nom</span>
<span class="t" id="t39" style="left:602.6px;top:195px;color:#4c607a;transform:scaleX(1.0534);">Modifié le</span>
<span class="t" id="t40" style="left:746.9px;top:195px;color:#4c607a;transform:scaleX(0.9533);">Type</span>
<span class="t" id="t41" style="left:867.0px;top:195px;color:#4c607a;transform:scaleX(0.9649);">Taille</span>
<span class="t" id="t42" style="left:362.8px;top:224px;color:#000;transform:scaleX(1.0096);">Ant Movie Catalog</span>
<span class="t" id="t43" style="left:602.6px;top:224px;color:#6d6d6d;transform:scaleX(0.9564);">11/04/2018 13:31</span>
<span class="t" id="t44" style="left:746.9px;top:224px;color:#6d6d6d;transform:scaleX(0.9675);">Dossier de fichiers</span>
<span class="t" id="t45" style="left:362.8px;top:245px;color:#000;transform:scaleX(1.0209);">Appart</span>
<span class="t" id="t46" style="left:602.6px;top:245px;color:#6d6d6d;transform:scaleX(0.9473);">21/10/2013 18:06</span>
<span class="t" id="t47" style="left:746.9px;top:245px;color:#6d6d6d;transform:scaleX(0.9675);">Dossier de fichiers</span>
<span class="t" id="t48" style="left:362.8px;top:266px;color:#000;transform:scaleX(0.9982);">Contacts Windows</span>
<span class="t" id="t49" style="left:602.6px;top:266px;color:#6d6d6d;transform:scaleX(0.9473);">12/03/2021 14:16</span>
<span class="t" id="t50" style="left:746.9px;top:266px;color:#6d6d6d;transform:scaleX(0.9675);">Dossier de fichiers</span>
<span class="t" id="t51" style="left:362.8px;top:287px;color:#000;transform:scaleX(1.0032);">Documents</span>
<span class="t" id="t52" style="left:602.6px;top:287px;color:#6d6d6d;transform:scaleX(0.9564);">30/11/2021 17:38</span>
<span class="t" id="t53" style="left:746.9px;top:287px;color:#6d6d6d;transform:scaleX(0.9675);">Dossier de fichiers</span>
<span class="t" id="t54" style="left:362.8px;top:308px;color:#000;transform:scaleX(0.9622);">Firefox</span>
<span class="t" id="t55" style="left:602.6px;top:308px;color:#6d6d6d;transform:scaleX(0.9473);">02/12/2021 18:09</span>
<span class="t" id="t56" style="left:746.9px;top:308px;color:#6d6d6d;transform:scaleX(0.9675);">Dossier de fichiers</span>
<span class="t" id="t57" style="left:362.8px;top:329px;color:#000;transform:scaleX(0.9936);">Firefox - Copie</span>
<span class="t" id="t58" style="left:602.6px;top:329px;color:#6d6d6d;transform:scaleX(0.9564);">30/11/2021 17:16</span>
<span class="t" id="t59" style="left:746.9px;top:329px;color:#6d6d6d;transform:scaleX(0.9675);">Dossier de fichiers</span>
<span class="t" id="t60" style="left:362.8px;top:350px;color:#000;transform:scaleX(0.9454);">Gigaset</span>
<span class="t" id="t61" style="left:602.6px;top:350px;color:#6d6d6d;transform:scaleX(0.9473);">07/03/2021 10:37</span>
<span class="t" id="t62" style="left:746.9px;top:350px;color:#6d6d6d;transform:scaleX(0.9675);">Dossier de fichiers</span>
<span class="t" id="t63" style="left:362.8px;top:371px;color:#000;transform:scaleX(0.9680);">Images</span>
<span class="t" id="t64" style="left:602.6px;top:371px;color:#6d6d6d;transform:scaleX(0.9473);">24/03/2021 18:52</span>
<span class="t" id="t65" style="left:746.9px;top:371px;color:#6d6d6d;transform:scaleX(0.9675);">Dossier de fichiers</span>
<span class="t" id="t66" style="left:362.8px;top:392px;color:#000;transform:scaleX(1.0297);">Money</span>
<span class="t" id="t67" style="left:602.6px;top:392px;color:#6d6d6d;transform:scaleX(0.9473);">02/12/2021 16:02</span>
<span class="t" id="t68" style="left:746.9px;top:392px;color:#6d6d6d;transform:scaleX(0.9675);">Dossier de fichiers</span>
<span class="t" id="t69" style="left:362.8px;top:413px;color:#000;transform:scaleX(1.0469);">Outlook</span>
<span class="t" id="t70" style="left:602.6px;top:413px;color:#6d6d6d;transform:scaleX(0.9473);">02/12/2021 17:56</span>
<span class="t" id="t71" style="left:746.9px;top:413px;color:#6d6d6d;transform:scaleX(0.9675);">Dossier de fichiers</span>
<span class="t" id="t72" style="left:362.8px;top:434px;color:#000;transform:scaleX(1.0048);">bookmarks-2021-11-28.html</span>
<span class="t" id="t73" style="left:602.6px;top:434px;color:#6d6d6d;transform:scaleX(0.9564);">28/11/2021 19:32</span>
<span class="t" id="t74" style="left:746.9px;top:434px;color:#6d6d6d;transform:scaleX(1.0011);">Document HTML</span>
<span class="t" id="t75" style="left:889.3px;top:434px;color:#6d6d6d;transform:scaleX(0.9179);">1 907 Ko</span>
<span class="t" id="t76" style="left:362.8px;top:455px;color:#000;transform:scaleX(0.9897);">bookmarks-2021-11-28.json</span>
<span class="t" id="t77" style="left:602.6px;top:455px;color:#6d6d6d;transform:scaleX(0.9564);">28/11/2021 19:32</span>
<span class="t" id="t78" style="left:746.9px;top:455px;color:#6d6d6d;transform:scaleX(0.9279);">Fichier JSON</span>
<span class="t" id="t79" style="left:898.3px;top:455px;color:#6d6d6d;transform:scaleX(0.9225);">122 Ko</span>
<span class="t" id="t80" style="left:362.8px;top:476px;color:#000;transform:scaleX(0.9634);">Classic Shell_Menu Settings.xml</span>
<span class="t" id="t81" style="left:602.6px;top:476px;color:#6d6d6d;transform:scaleX(0.9473);">14/04/2021 21:26</span>
<span class="t" id="t82" style="left:746.9px;top:476px;color:#6d6d6d;transform:scaleX(0.9939);">Document XML</span>
<span class="t" id="t83" style="left:909.3px;top:476px;color:#6d6d6d;transform:scaleX(0.9762);">4 Ko</span>
<span class="t" id="t84" style="left:362.8px;top:497px;color:#000;transform:scaleX(0.9428);">Sauvegarde EasyBCD (2021-11-29).bcd</span>
<span class="t" id="t85" style="left:602.6px;top:497px;color:#6d6d6d;transform:scaleX(0.9564);">29/11/2021 14:13</span>
<span class="t" id="t86" style="left:746.9px;top:497px;color:#6d6d6d;transform:scaleX(0.9384);">Fichier BCD</span>
<span class="t" id="t87" style="left:904.3px;top:497px;color:#6d6d6d;transform:scaleX(0.9280);">32 Ko</span>
<span class="t" id="t88" style="left:53.8px;top:194px;color:#000;transform:scaleX(1.0033);">Bibliothèques</span>
<span class="t" id="t89" style="left:53.8px;top:218px;color:#000;transform:scaleX(0.8664);">F_14 (G:)</span>
<span class="t" id="t90" style="left:53.8px;top:242px;color:#000;transform:scaleX(0.9242);">Lecteur USB (L:)</span>
<span class="t" id="t91" style="left:53.8px;top:266px;color:#000;transform:scaleX(0.8870);">Réseau</span>
<span class="t" id="t92" style="left:61.6px;top:290px;color:#000;transform:scaleX(0.8906);">NAS_DS415</span>
<span class="t" id="t93" style="left:69.7px;top:314px;color:#000;transform:scaleX(0.9678);">Ateca</span>
<span class="t" id="t94" style="left:69.7px;top:338px;color:#000;transform:scaleX(1.0412);">Attente</span>
<span class="t" id="t95" style="left:69.7px;top:362px;color:#000;transform:scaleX(0.9792);">Backup</span>
<span class="t" id="t96" style="left:69.7px;top:386px;color:#000;transform:scaleX(0.9827);">Concerts</span>
<span class="t" id="t97" style="left:69.7px;top:410px;color:#000;transform:scaleX(1.0115);">Documents</span>
<span class="t" id="t98" style="left:77.9px;top:434px;color:#000;transform:scaleX(1.0055);">Ant Movie Catalog</span>
<span class="t" id="t99" style="left:77.9px;top:458px;color:#000;transform:scaleX(1.0153);">Appart</span>
<span class="t" id="t100" style="left:77.9px;top:482px;color:#000;transform:scaleX(0.9924);">Contacts</span>
<span class="t" id="t101" style="left:77.9px;top:506px;color:#000;transform:scaleX(1.0032);">Documents</span>
<span class="t" id="t102" style="left:77.9px;top:530px;color:#000;transform:scaleX(0.9595);">Firefox</span>
<span class="t" id="t103" style="left:77.9px;top:554px;color:#000;transform:scaleX(0.9936);">Firefox - Copie</span>
<span class="t" id="t104" style="left:77.9px;top:578px;color:#000;transform:scaleX(0.9430);">Gigaset</span>
<span class="t" id="t105" style="left:77.9px;top:602px;color:#000;transform:scaleX(0.9770);">Mes images</span>
<span class="t" id="t106" style="left:77.9px;top:626px;color:#000;transform:scaleX(1.0324);">Money</span>
<span class="t" id="t107" style="left:77.9px;top:650px;color:#000;transform:scaleX(1.0493);">Outlook</span>
<span class="t" id="t108" style="left:69.7px;top:674px;color:#000;transform:scaleX(0.9905);">Films</span>
<span class="t" id="t109" style="left:69.7px;top:698px;color:#000;transform:scaleX(0.9620);">Films2</span>
<div class="b" style="left:84px;top:420px;width:102px;height:100px;border:1px solid rgba(150,208,244,0.95);border-radius:3px;background:linear-gradient(100deg,rgba(255,255,255,0.12),rgba(196,230,252,0.5));box-shadow:1px 1px 2px rgba(0,0,0,0.28)"></div><svg style="left:104px;top:429px" width="64" height="84" viewBox="0 0 64 84"><path d="M0.5 0.5 H44.5 V19 H63.5 V83.5 H0.5 Z" fill="rgba(240,243,246,0.8)"/><path d="M44.5 0.5 V19 H63.5 Z" fill="rgba(226,231,236,0.8)"/><path d="M0.5 0.5 H44.5 L63.5 19 V83.5 H0.5 Z M44.5 0.5 V19 H63.5" fill="none" stroke="#c2c6ca"/></svg><div class="b" style="left:147px;top:525px;width:143px;height:18px;border:1px solid #767676;background:#fff"></div><svg style="left:152px;top:530px" width="10" height="10" viewBox="0 0 10 10"><path d="M5 0.2 V9.6 M0.2 4.9 H9.8" stroke="#1212c4" stroke-width="1.9"/></svg>
<span class="t" id="t110" style="left:167.0px;top:528px;color:#2a2ed2;transform:scaleX(0.9842);">Copier sur <span style="color:#15157a">Documents</span></span>
</div></body></html>
